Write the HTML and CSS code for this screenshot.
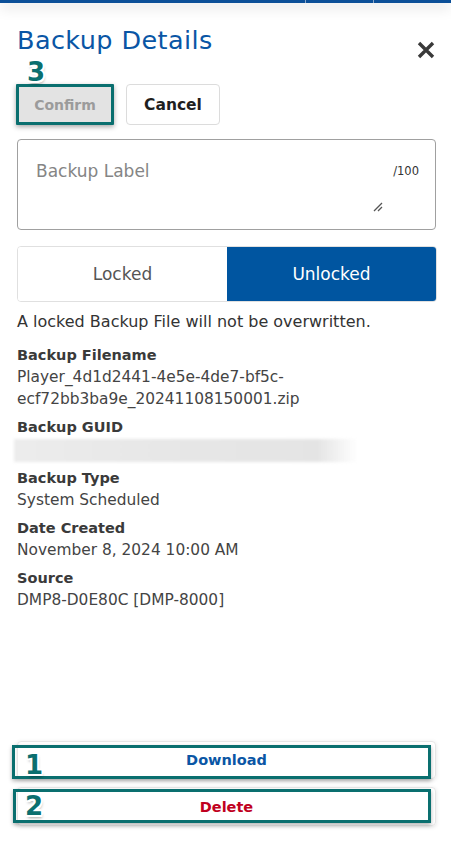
FILE: index.html
```html
<!DOCTYPE html>
<html lang="en">
<head>
<meta charset="utf-8">
<title>Backup Details</title>
<link rel="stylesheet" href="styles.css">
</head>
<body>
<div class="page">
  <div class="topbar">
    <span class="seg seg-a"></span><span class="seg seg-b"></span><span class="seg seg-c"></span>
  </div>
  <main class="panel">
    <div class="title-row">
      <h1 class="title">Backup Details</h1>
      <button class="close" aria-label="Close">
        <svg width="20" height="20" viewBox="0 0 20 20"><path d="M3 3 L17 17 M17 3 L3 17" stroke="#3a3a3a" stroke-width="3.4" stroke-linecap="butt"/></svg>
      </button>
    </div>
    <div class="btn-row">
      <div class="confirm-wrap">
        <button class="btn btn-confirm">Confirm</button>
        <span class="badge badge-3">3</span>
      </div>
      <button class="btn btn-cancel">Cancel</button>
    </div>
    <div class="label-box">
      <span class="placeholder">Backup Label</span>
      <span class="counter">/100</span>
      <svg class="resize" width="10" height="10" viewBox="0 0 10 10"><path d="M9 1 L1 9 M9 5 L5 9" stroke="#555" stroke-width="1.3"/></svg>
    </div>
    <div class="toggle">
      <div class="opt">Locked</div>
      <div class="opt opt-on">Unlocked</div>
    </div>
    <p class="note">A locked Backup File will not be overwritten.</p>
    <dl class="details">
      <div class="group">
        <dt>Backup Filename</dt>
        <dd>Player_4d1d2441-4e5e-4de7-bf5c-<br>ecf72bb3ba9e_20241108150001.zip</dd>
      </div>
      <div class="group">
        <dt>Backup GUID</dt>
        <dd class="guid"><span class="blur"></span></dd>
      </div>
      <div class="group">
        <dt>Backup Type</dt>
        <dd>System Scheduled</dd>
      </div>
      <div class="group">
        <dt>Date Created</dt>
        <dd>November 8, 2024 10:00 AM</dd>
      </div>
      <div class="group">
        <dt>Source</dt>
        <dd>DMP8-D0E80C [DMP-8000]</dd>
      </div>
    </dl>
    <div class="actions">
      <div class="card-btn">
        <span class="txt txt-download">Download</span>
        <span class="hl hl-1"></span>
        <span class="badge badge-1">1</span>
      </div>
      <div class="card-btn">
        <span class="txt txt-delete">Delete</span>
        <span class="hl hl-2"></span>
        <span class="badge badge-2">2</span>
      </div>
    </div>
  </main>
</div>
</body>
</html>
```

FILE: styles.css
```css
* { box-sizing: border-box; }
html, body { margin: 0; padding: 0; background: #fff; }
body {
  font-family: "DejaVu Sans", "Liberation Sans", sans-serif;
  color: #333;
}
.page {
  min-height: 841px;
  display: flex;
  flex-direction: column;
}
.topbar {
  height: 3px;
  background: #0b4f98;
  display: flex;
  box-shadow: 0 3px 14px rgba(0,0,0,0.28);
  position: relative;
  z-index: 1;
}
.seg { height: 3px; }
.seg-a { width: 306px; border-right: 1px solid #8aa6c8; }
.seg-b { width: 68px; border-right: 1px solid #8aa6c8; }
.seg-c { flex: 1; }

.panel {
  flex: 1;
  display: flex;
  flex-direction: column;
  padding: 21px 14px 15px 17px;
}
.title-row {
  display: flex;
  justify-content: space-between;
  align-items: flex-start;
}
.title {
  margin: 0;
  font-weight: normal;
  font-size: 25.5px;
  line-height: 32px;
  color: #0a56a5;
  letter-spacing: 0.4px;
}
.close {
  border: 0;
  background: none;
  padding: 0;
  margin: 15px 0 0 0;
  width: 22px;
  height: 22px;
  display: flex;
  align-items: center;
  justify-content: center;
}
.btn-row {
  display: flex;
  gap: 12px;
  margin-top: 23px;
}
.confirm-wrap { position: relative; margin-left: -1px; }
.btn {
  font-family: inherit;
  font-weight: bold;
  font-size: 14px;
  height: 41px;
  border-radius: 4px;
  padding: 0;
}
.btn-confirm {
  width: 98px;
  background: #e3e3e3;
  color: #9b9b9b;
  border: 3px solid #0a6f6f;
  border-radius: 1px;
  box-shadow: 0 2px 5px rgba(0,0,0,0.35);
}
.btn-cancel {
  width: 94px;
  background: #fff;
  color: #1f1f1f;
  border: 1px solid #dcdcdc;
  font-size: 15.5px;
}
.badge {
  position: absolute;
  font-family: "DejaVu Sans", sans-serif;
  font-weight: bold;
  font-size: 26px;
  line-height: 1;
  color: #0a6f6f;
  text-shadow:
    -2px 0 0 #fff, 2px 0 0 #fff, 0 -2px 0 #fff, 0 2px 0 #fff,
    -1.5px -1.5px 0 #fff, 1.5px 1.5px 0 #fff, -1.5px 1.5px 0 #fff, 1.5px -1.5px 0 #fff,
    1px 3px 3px rgba(0,0,0,0.35);
}
.badge-3 { left: 11px; top: -25px; }

.label-box {
  position: relative;
  margin-top: 14px;
  height: 91px;
  border: 1px solid #a0a0a0;
  border-radius: 4px;
  margin-right: 1px;
}
.placeholder {
  position: absolute;
  left: 18px;
  top: 21px;
  font-size: 17px;
  color: #858585;
}
.counter {
  position: absolute;
  right: 16px;
  top: 24px;
  font-size: 11.5px;
  color: #333;
}
.resize { position: absolute; left: 355px; top: 62px; }

.toggle {
  display: flex;
  margin-top: 16px;
  height: 56px;
  border-radius: 4px;
  overflow: hidden;
  border: 1px solid #e0e0e0;
}
.opt {
  flex: 1;
  display: flex;
  align-items: center;
  justify-content: center;
  font-size: 17px;
  color: #555;
  background: #fff;
}
.opt-on {
  background: #0055a0;
  color: #fff;
}
.note {
  margin: 9px 0 0;
  font-size: 16px;
  line-height: 22px;
  color: #333;
}
.details { margin: 11px 0 0; }
.group { margin-bottom: 6px; }
.group dt {
  font-weight: bold;
  font-size: 14.5px;
  line-height: 22px;
  color: #3a3a3a;
}
.group dd {
  margin: 0;
  font-size: 15.4px;
  line-height: 22px;
  color: #444;
}
.guid { height: 23px; position: relative; }
.blur {
  position: absolute;
  left: -3px;
  top: 1px;
  width: 344px;
  height: 23px;
  background: linear-gradient(90deg, #ececec 0%, #e6e6e6 50%, #e4e4e4 88%, rgba(240,240,240,0) 100%);
  filter: blur(1.5px);
}

.actions {
  margin-top: auto;
  display: flex;
  flex-direction: column;
  gap: 8px;
}
.card-btn {
  position: relative;
  height: 38px;
  border: 1px solid #e6e6e6;
  border-radius: 4px;
  box-shadow: 0 1px 4px rgba(0,0,0,0.12);
  display: flex;
  align-items: center;
  justify-content: center;
  margin-right: 1px;
}
.card-btn + .card-btn { height: 39px; }
.txt { font-weight: bold; font-size: 14.5px; }
.txt-download { color: #0a56a5; }
.txt-delete { color: #c00020; }
.hl {
  position: absolute;
  border: 3px solid #0a6f6f;
  box-shadow: 0 2px 4px rgba(0,0,0,0.3);
}
.hl-1 { left: -6px; top: 3px; width: 419px; height: 34px; }
.hl-2 { left: -5px; top: 1px; width: 418px; height: 34px; }
.badge-1 { left: 7px; top: 10px; }
.badge-2 { left: 7px; top: 5px; }
```
